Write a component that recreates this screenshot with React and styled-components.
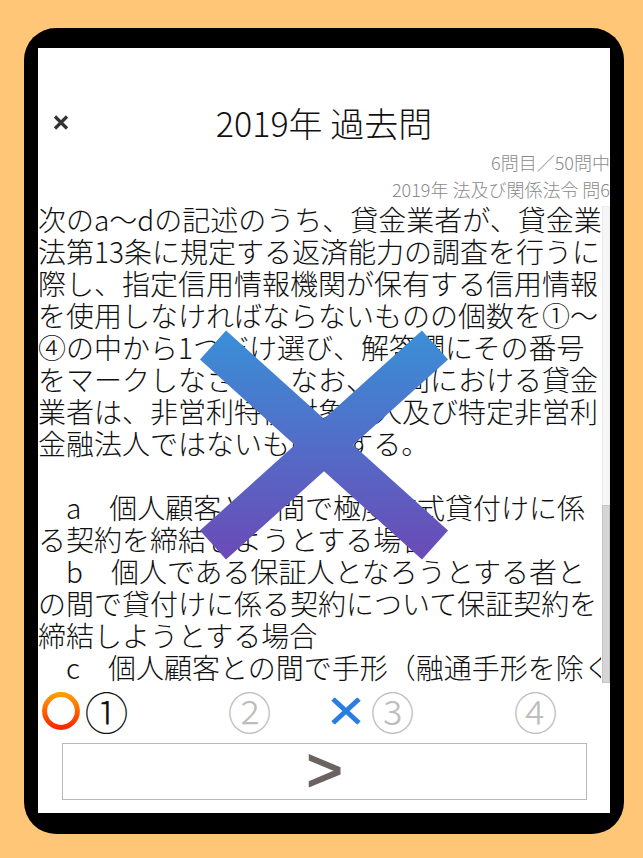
import styled, { createGlobalStyle } from "styled-components";

const GlobalStyle = createGlobalStyle`
  html, body {
    margin: 0;
    padding: 0;
    background: #ffc678;
  }
  body {
    font-family: "Noto Sans CJK JP", "Noto Sans", sans-serif;
  }
`;

const QUESTION = [
  "次のa～dの記述のうち、貸金業者が、貸金業",
  "法第13条に規定する返済能力の調査を行うに",
  "際し、指定信用情報機関が保有する信用情報",
  "を使用しなければならないものの個数を①～",
  "④の中から1つだけ選び、解答欄にその番号",
  "をマークしなさい。なお、本問における貸金",
  "業者は、非営利特例対象法人及び特定非営利",
  "金融法人ではないものとする。",
  "",
  "　a　個人顧客との間で極度方式貸付けに係",
  "る契約を締結しようとする場合",
  "　b　個人である保証人となろうとする者と",
  "の間で貸付けに係る契約について保証契約を",
  "締結しようとする場合",
  "　c　個人顧客との間で手形（融通手形を除く",
  "。）の割引を内容とする契約を締結しようと",
];

const CHOICES = [
  { label: "①", mark: "correct", active: true },
  { label: "②" },
  { label: "③", mark: "wrong" },
  { label: "④" },
];

function CloseIcon() {
  return (
    <svg width="16" height="17" viewBox="0 0 16 17">
      <path d="M2 2.5 L14 14.5 M14 2.5 L2 14.5" stroke="#333" strokeWidth="3.2" strokeLinecap="butt" />
    </svg>
  );
}

function CircleMark() {
  return (
    <svg width="38" height="38" viewBox="0 0 38 38">
      <defs>
        <linearGradient id="ring" x1="0" y1="0" x2="0" y2="1">
          <stop offset="0" stopColor="#ff9c00" />
          <stop offset="1" stopColor="#ff2600" />
        </linearGradient>
      </defs>
      <circle cx="19" cy="19" r="16.4" fill="none" stroke="url(#ring)" strokeWidth="5" />
    </svg>
  );
}

function CrossMark() {
  return (
    <svg width="30" height="27" viewBox="0 0 30 27">
      <path d="M2 1.5 L28 25.5 M28 1.5 L2 25.5" stroke="#2a7ee2" strokeWidth="5" />
    </svg>
  );
}

function BigCross() {
  return (
    <svg width="260" height="234" viewBox="0 0 260 234">
      <defs>
        <linearGradient id="bigx" x1="0" y1="0" x2="0" y2="234" gradientUnits="userSpaceOnUse">
          <stop offset="0" stopColor="#3990d8" />
          <stop offset="1" stopColor="#6c49b6" />
        </linearGradient>
      </defs>
      <path d="M18 17 L240 217 M240 17 L18 217" stroke="url(#bigx)" strokeWidth="39" strokeLinecap="butt" />
    </svg>
  );
}

function App() {
  return (
    <>
      <GlobalStyle />
      <Page>
        <Frame>
          <Screen>
            <Header>
              <CloseButton>
                <CloseIcon />
              </CloseButton>
              <Title>2019年 過去問</Title>
              <span />
            </Header>
            <Meta>
              <MetaLine>6問目／50問中</MetaLine>
              <MetaLine>2019年 法及び関係法令 問6</MetaLine>
            </Meta>
            <Body>
              <TextArea>
                {QUESTION.map((line, i) => (
                  <Line key={i}>{line || "\u00a0"}</Line>
                ))}
              </TextArea>
              <ScrollTrack>
                <ScrollThumb />
              </ScrollTrack>
            </Body>
            <Choices>
              {CHOICES.map((c) => (
                <Choice key={c.label}>
                  <ChoiceNum $active={c.active}>
                    {c.mark && (
                      <MarkSlot $gap={c.mark === "correct" ? 5 : 10}>
                        {c.mark === "correct" ? <CircleMark /> : <CrossMark />}
                      </MarkSlot>
                    )}
                    {c.label}
                  </ChoiceNum>
                </Choice>
              ))}
            </Choices>
            <NextButton>&gt;</NextButton>
            <Overlay>
              <BigCross />
            </Overlay>
          </Screen>
        </Frame>
      </Page>
    </>
  );
}

export default App;

const Page = styled.div`
  width: 643px;
  height: 858px;
  box-sizing: border-box;
  padding: 28px 19px 24px 24px;
`;

const Frame = styled.div`
  width: 600px;
  height: 806px;
  box-sizing: border-box;
  background: #000;
  border-radius: 32px;
  padding: 20px 14px 21px 14px;
`;

const Screen = styled.div`
  position: relative;
  width: 572px;
  height: 765px;
  background: #fff;
  display: flex;
  flex-direction: column;
  overflow: hidden;
`;

const Header = styled.div`
  height: 101px;
  box-sizing: border-box;
  padding-top: 48px;
  display: grid;
  grid-template-columns: 1fr auto 1fr;
  align-items: center;
`;

const CloseButton = styled.div`
  padding-left: 15px;
  display: flex;
  align-items: center;
  height: 53px;
`;

const Title = styled.div`
  font-size: 34px;
  font-weight: 300;
  color: #111;
  line-height: 53px;
  white-space: nowrap;
`;

const Meta = styled.div`
  height: 54px;
  display: flex;
  flex-direction: column;
  align-items: flex-end;
`;

const MetaLine = styled.div`
  font-size: 18px;
  font-weight: 300;
  line-height: 27px;
  color: #8a8a8a;
  white-space: nowrap;
`;

const Body = styled.div`
  height: 480px;
  display: flex;
`;

const TextArea = styled.div`
  flex: 1;
  overflow: hidden;
  color: #111;
`;

const Line = styled.div`
  font-size: 28px;
  font-weight: 300;
  line-height: 32px;
  white-space: nowrap;
`;

const ScrollTrack = styled.div`
  width: 8px;
  margin-left: 1px;
  margin-top: 3px;
  background: #f6f6f6;
  border: 1px solid #ececec;
  border-bottom: none;
  box-sizing: border-box;
  display: flex;
  flex-direction: column;
  justify-content: flex-end;
`;

const ScrollThumb = styled.div`
  height: 176px;
  background: #d5d5d5;
  border: 1px solid #c4c4c4;
  margin: 0 -1px;
`;

const Choices = styled.div`
  height: 60px;
  display: grid;
  grid-template-columns: repeat(4, 1fr);
  align-items: center;
`;

const Choice = styled.div`
  display: flex;
  justify-content: center;
  padding-right: 6px;
`;

const ChoiceNum = styled.span`
  position: relative;
  font-size: 44px;
  font-weight: 300;
  line-height: 46px;
  margin-top: -4px;
  color: ${(p) => (p.$active ? "#111" : "#bdbdbd")};
`;

const MarkSlot = styled.span`
  position: absolute;
  right: calc(100% + ${(p) => p.$gap}px);
  top: 50%;
  transform: translateY(-50%);
  display: flex;
`;

const NextButton = styled.div`
  height: 57px;
  margin: 0 23px 0 24px;
  box-sizing: border-box;
  border: 1px solid #b8b8b8;
  display: flex;
  align-items: center;
  justify-content: center;
  font-family: "Liberation Sans", Arial, sans-serif;
  font-size: 62px;
  font-weight: 400;
  line-height: 1;
  padding-bottom: 4px;
  color: #6b6262;
  -webkit-text-stroke: 1.6px #6b6262;
`;

const Overlay = styled.div`
  position: absolute;
  left: 157px;
  top: 280px;
  pointer-events: none;
  display: flex;
`;
